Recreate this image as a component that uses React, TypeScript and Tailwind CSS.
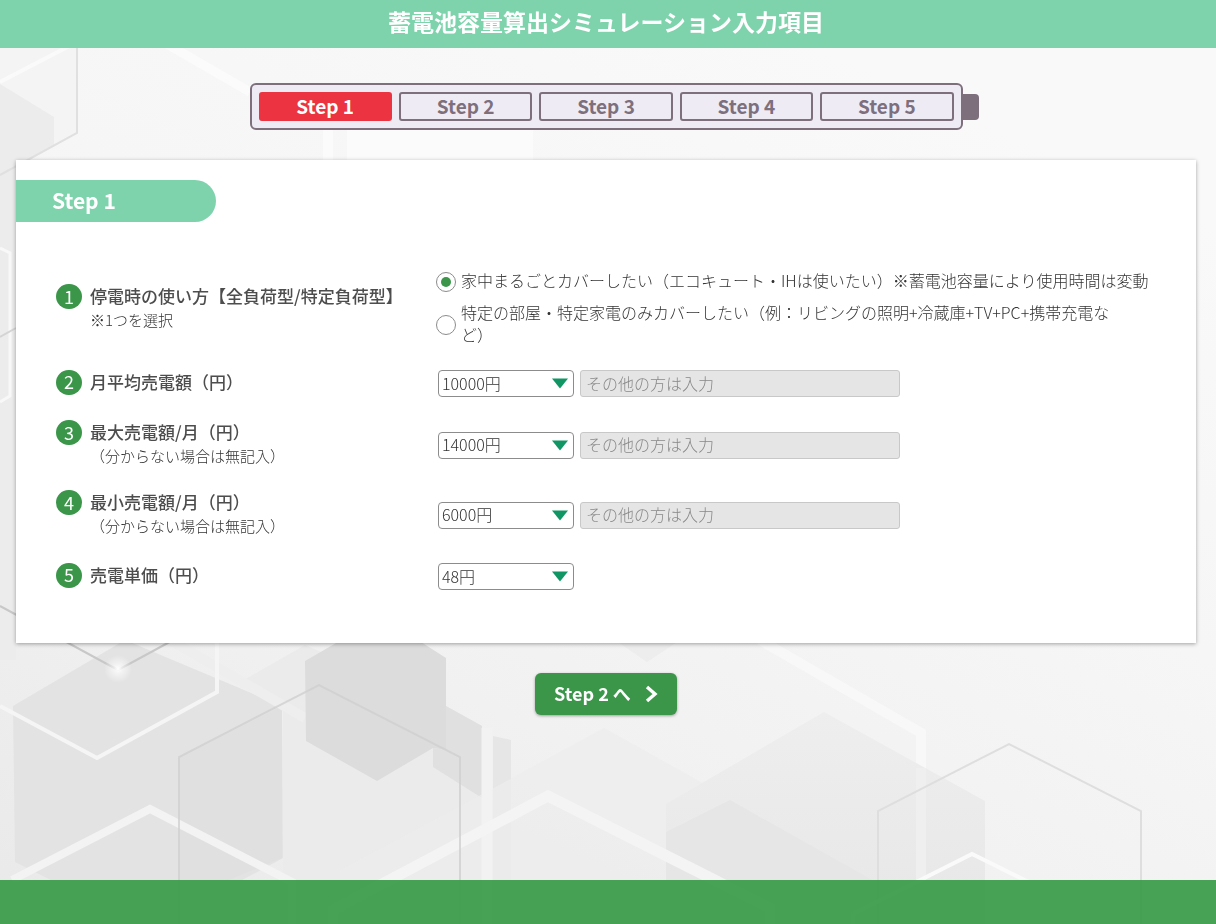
import { useState } from "react";
import type { ReactNode } from "react";

const steps = ["Step 1", "Step 2", "Step 3", "Step 4", "Step 5"];

const usageOptions = [
    {
        id: "whole",
        label: "家中まるごとカバーしたい（エコキュート・IHは使いたい）※蓄電池容量により使用時間は変動",
    },
    {
        id: "partial",
        label: "特定の部屋・特定家電のみカバーしたい（例：リビングの照明+冷蔵庫+TV+PC+携帯充電な\nど）",
    },
];

const Background = () => (
    <svg
        aria-hidden="true"
        className="fixed inset-0 -z-10 h-full w-full"
        viewBox="0 0 1216 924"
        preserveAspectRatio="xMidYMid slice"
        fill="none"
    >
        <defs>
            <linearGradient id="base" x1="0" y1="1" x2="0.6" y2="0">
                <stop offset="0" stopColor="#e9e9e9" />
                <stop offset="0.35" stopColor="#f1f1f1" />
                <stop offset="0.65" stopColor="#f6f6f6" />
                <stop offset="1" stopColor="#f9f9f9" />
            </linearGradient>
            <linearGradient id="hexLight" x1="0" y1="0" x2="0" y2="1">
                <stop offset="0" stopColor="#eeeeee" />
                <stop offset="1" stopColor="#e7e7e7" />
            </linearGradient>
            <radialGradient id="glow">
                <stop offset="0" stopColor="#fff" />
                <stop offset="0.3" stopColor="#fff" stopOpacity="0.6" />
                <stop offset="1" stopColor="#fff" stopOpacity="0" />
            </radialGradient>
        </defs>
        <rect width="1216" height="924" fill="url(#base)" />
        <path d="M0 160H16V660H0Z" fill="#ececec" />
        <path d="M0 48H77V133L0 175Z" fill="#f4f4f4" />
        <path d="M0 84L54 117V146L0 175Z" fill="#ececec" />
        <path d="M0 82L77 42" stroke="#fafafa" strokeWidth="4" />
        <path d="M77 48V133L0 175" stroke="#e0e0e0" strokeWidth="2" />
        <path d="M0 248L10 253V396L0 402" stroke="#f8f8f8" strokeWidth="3" />
        <path d="M0 337L16 328" stroke="#d4d4d4" strokeWidth="2" />
        <path d="M160 40L250 92" stroke="#fbfbfb" strokeWidth="9" />
        <path d="M347 125H533V165H347Z" fill="#fbfbfb" />
        <path d="M323 125H333V165H323Z" fill="#fbfbfb" />
        <path d="M242 681L305 645L446 706L482 726V924H283V706Z" fill="#ebebeb" />
        <path d="M13 706L125 640L282 706L283 858L150 930L15 862Z" fill="#e3e3e3" />
        <path d="M180 757L282 706V858L180 900Z" fill="#e0e0e0" />
        <path d="M170 640L305 718" stroke="#eeeeee" strokeWidth="10" />
        <path d="M305 661L350 635H410L446 658V750L433 748L377 781L306 741Z" fill="#dcdcdc" />
        <path d="M446 706L482 726V798L433 767V748L446 750Z" fill="#e0e0e0" />
        <path d="M493 736L511 740V924H493Z" fill="#e6e6e6" />
        <path d="M340 924V870L490 790L604 728L760 815V924Z" fill="#ececec" fillOpacity="0.7" />
        <path d="M615 640L647 662L680 640Z" fill="#ededed" />
        <path d="M760 640L921 733V924" stroke="#f8f8f8" strokeWidth="10" />
        <path d="M666 804L824 712L985 801V924H666Z" fill="url(#hexLight)" />
        <path d="M666 832L730 800L890 890V924H666Z" fill="#e6e6e6" />
        <path d="M921 768V924" stroke="#efefef" strokeWidth="10" />
        <path d="M487 728V924" stroke="#f2f2f2" strokeWidth="11" />
        <path d="M333 924V910L548 796L770 908V924" stroke="#f4f4f4" strokeWidth="11" />
        <path d="M12 880L150 809L292 882V924" stroke="#f3f3f3" strokeWidth="8" />
        <path d="M0 706L97 758L217 692V640" stroke="#f5f5f5" strokeWidth="4" />
        <path d="M0 606L118 670L236 606" stroke="#c8c8c8" strokeWidth="2" />
        <path d="M179 924V757L319 685L460 757V924" stroke="#cfcfcf" strokeWidth="2" strokeOpacity="0.8" />
        <path d="M878 924V811L1009 744L1141 811V924" stroke="#dedede" strokeWidth="2" />
        <path d="M853 924V914L972 854L1093 914V924" stroke="#fafafa" strokeWidth="4" />
        <circle cx="118" cy="669" r="14" fill="url(#glow)" />
    </svg>
);

const StepBar = ({ current }: { current: number }) => (
    <nav aria-label="ステップ" className="relative mx-auto w-full max-w-[713px]">
        <ol className="flex gap-[7px] rounded-md border-2 border-[#7d6f7c] bg-[#eeebf5] p-[7px]">
            {steps.map((step, i) => (
                <li
                    key={step}
                    aria-current={i === current ? "step" : undefined}
                    className={
                        i === current
                            ? "flex h-[29px] flex-1 items-center justify-center rounded-[3px] border-2 border-[#eb3342] bg-[#eb3342] pb-0.5 text-[19px] leading-none font-bold text-white"
                            : "flex h-[29px] flex-1 items-center justify-center rounded-[3px] border-2 border-[#7d6f7c] pb-0.5 text-[19px] leading-none font-bold text-[#7d6f7c]"
                    }
                >
                    {step}
                </li>
            ))}
        </ol>
        {/* battery terminal */}
        <span className="absolute top-[11px] left-full h-[26px] w-4 rounded-r bg-[#7d6f7c]" />
    </nav>
);

interface RowProps {
    no: number;
    title: string;
    note?: string;
    htmlFor?: string;
    children: ReactNode;
}

const Row = ({ no, title, note, htmlFor, children }: RowProps) => (
    <div className="flex min-h-[33px] items-center">
        <div className="flex w-[380px] shrink-0 gap-2 pb-[3px]">
            <span className="flex h-[25px] w-[26px] items-center justify-center rounded-full bg-[#3b964a] pb-0.5 text-lg leading-none text-white">
                {no}
            </span>
            <div>
                <label id={`title-${no}`} htmlFor={htmlFor} className="block text-[17px] leading-6 font-medium">
                    {title}
                </label>
                {note && <p className="text-[15px] leading-[23px] font-light text-[#333]">{note}</p>}
            </div>
        </div>
        {children}
    </div>
);

interface AmountFieldProps {
    id: string;
    value: string;
    other?: boolean;
}

const AmountField = ({ id, value, other = true }: AmountFieldProps) => (
    <div className="ml-0.5 flex gap-1.5">
        <div className="relative">
            <select
                id={id}
                defaultValue={value}
                className="h-[27px] w-[136px] appearance-none rounded border border-[#8c8c8c] bg-white pb-0.5 pl-[3px] text-base leading-5 font-light text-[#333]"
            >
                <option>{value}</option>
            </select>
            <svg
                aria-hidden="true"
                className="pointer-events-none absolute top-2 right-1.5 h-[11px] w-4"
                viewBox="0 0 16 11"
            >
                <path d="M0 0.5H16L8 10.5Z" fill="#0f9664" />
            </svg>
        </div>
        {other && (
            <input
                type="text"
                disabled
                aria-label="その他の金額"
                placeholder="その他の方は入力"
                className="h-[27px] w-80 rounded-[3px] border border-[#c8c8c8] bg-[#e5e5e5] px-[5px] pb-0.5 text-base leading-5 font-light placeholder:text-[#888]"
            />
        )}
    </div>
);

const App = () => {
    const [usage, setUsage] = useState("whole");

    return (
        <div className="min-h-screen font-['Noto_Sans_CJK_JP',sans-serif] text-[#4d4d4d]">
            <Background />
            <header className="flex h-12 items-center justify-center bg-[#7ed3ad] pr-1 pb-1.5">
                <h1 className="text-[23px] font-bold text-white">蓄電池容量算出シミュレーション入力項目</h1>
            </header>

            <main className="pt-[35px] pr-1 pb-20">
                <StepBar current={0} />

                <form>
                    <section className="mx-4 mt-[30px] bg-white pt-5 pb-[50px] shadow-[0_1px_4px_rgba(0,0,0,0.35)]">
                        <h2 className="flex h-[42px] w-[200px] items-center rounded-r-full bg-[#7ed3ad] pl-9 text-[21px] font-bold text-white">
                            Step 1
                        </h2>

                        <div className="mt-[49px] flex flex-col gap-5 px-10">
                            <Row no={1} title="停電時の使い方【全負荷型/特定負荷型】" note="※1つを選択">
                                <div role="radiogroup" aria-labelledby="title-1" className="flex flex-col gap-2.5">
                                    {usageOptions.map((option) => (
                                        <label
                                            key={option.id}
                                            className="flex items-center gap-[5px] text-base leading-[22px] font-light whitespace-pre-line text-[#333]"
                                        >
                                            <input
                                                type="radio"
                                                name="usage"
                                                checked={usage === option.id}
                                                onChange={() => setUsage(option.id)}
                                                className="size-5 shrink-0 appearance-none rounded-full border border-[#8c8c8c] bg-white bg-clip-content p-1 checked:bg-[#3b964a]"
                                            />
                                            <span className="-mt-0.5 pb-0.5">{option.label}</span>
                                        </label>
                                    ))}
                                </div>
                            </Row>
                            <Row no={2} title="月平均売電額（円）" htmlFor="average">
                                <AmountField id="average" value="10000円" />
                            </Row>
                            <Row no={3} title="最大売電額/月（円）" note="（分からない場合は無記入）" htmlFor="max">
                                <AmountField id="max" value="14000円" />
                            </Row>
                            <Row no={4} title="最小売電額/月（円）" note="（分からない場合は無記入）" htmlFor="min">
                                <AmountField id="min" value="6000円" />
                            </Row>
                            <Row no={5} title="売電単価（円）" htmlFor="price">
                                <AmountField id="price" value="48円" other={false} />
                            </Row>
                        </div>
                    </section>

                    <button
                        type="button"
                        className="mx-auto mt-[30px] flex h-[42px] w-[142px] items-center justify-center gap-3.5 rounded-md bg-[#3b964a] pb-0.5 text-lg font-bold text-white shadow-[0_1px_3px_rgba(0,0,0,0.35)]"
                    >
                        Step 2 へ
                        <svg aria-hidden="true" className="mt-0.5 h-[18px] w-[13px]" viewBox="0 0 13 18" fill="none">
                            <path d="M2 2L10 9L2 16" stroke="currentColor" strokeWidth="3.4" />
                        </svg>
                    </button>
                </form>
            </main>

            <footer className="fixed inset-x-0 bottom-0 h-11 bg-[#3d9c4b]/94" />
        </div>
    );
};

export default App;
